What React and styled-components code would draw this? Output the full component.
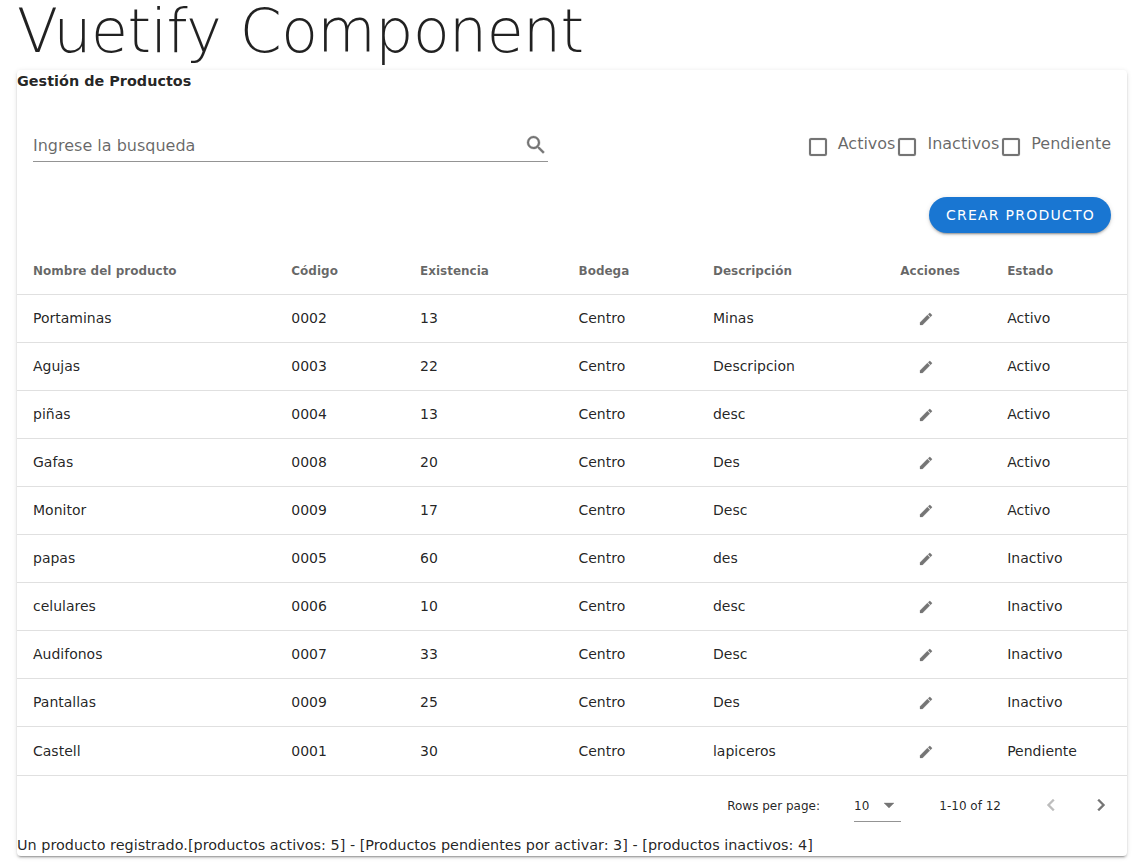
import React from "react";
import styled, { createGlobalStyle } from "styled-components";

const Global = createGlobalStyle`
  *, *::before, *::after { box-sizing: border-box; }
  body { margin: 0; background: #fff; overflow: hidden; }
`;
const Page = styled.main`
  height: 865px;
  padding: 0 18px 0 17px;
  font-family: "DejaVu Sans", sans-serif;
  color: rgba(0, 0, 0, 0.87);
`;
const Title = styled.h1`
  margin: 0;
  height: 70px;
  font-family: "DejaVu Sans Light", "DejaVu Sans", sans-serif;
  font-size: 60px;
  font-weight: 200;
  line-height: 62px;
  letter-spacing: -0.5px;
  white-space: nowrap;
`;
const Card = styled.section`
  height: 786px;
  border-radius: 4px;
  background: #fff;
  box-shadow: 0 3px 1px -2px rgba(0,0,0,.2), 0 2px 2px 0 rgba(0,0,0,.14), 0 1px 5px 0 rgba(0,0,0,.12);
`;
const Subtitle = styled.h2`
  margin: 0;
  height: 23px;
  font-size: 14.4px;
  font-weight: 700;
  line-height: 22px;
  letter-spacing: .009px;
`;
const Filters = styled.div`
  display: flex;
  justify-content: space-between;
  align-items: flex-start;
  height: 104px;
  padding: 35px 16px 0;
`;
const Search = styled.label`
  display: flex;
  justify-content: space-between;
  width: 515px;
  height: 34px;
  border-bottom: 1px solid #949494;
  font-size: 16px;
  line-height: 36px;
  color: rgba(0,0,0,.6);
  svg { margin-top: 5px; }
`;
const Icon = styled.svg`
  display: block;
  flex: none;
  width: ${p => p.$size || 24}px;
  height: ${p => p.$size || 24}px;
  fill: ${p => p.$color || "#757575"};
  stroke: ${p => p.$color || "#757575"};
  stroke-width: .35;
`;
const Checks = styled.div`
  display: flex;
  padding-top: 1px;
`;
const Check = styled.label`
  display: flex;
  font-size: 16px;
  line-height: 29px;
  color: rgba(0,0,0,.6);
  gap: 8px;
  svg { margin-top: 6px; stroke-width: .15; }
`;
const Actions = styled.div`
  display: flex;
  justify-content: flex-end;
  height: 50px;
  padding-right: 16px;
`;
const Button = styled.button`
  width: 182px;
  height: 36px;
  padding: 0 0 0 1px;
  border: 0;
  border-radius: 28px;
  background: #1976d2;
  color: #fff;
  font: 500 14px "DejaVu Sans", sans-serif;
  letter-spacing: 1.25px;
  box-shadow: 0 3px 1px -2px rgba(0,0,0,.2), 0 2px 2px 0 rgba(0,0,0,.14), 0 1px 5px 0 rgba(0,0,0,.12);
`;
const Table = styled.table`
  width: 100%;
  table-layout: fixed;
  border-collapse: separate;
  border-spacing: 0;
`;
const Head = styled.th`
  height: 48px;
  padding: 0 16px;
  border-bottom: 1px solid rgba(0,0,0,.12);
  text-align: left;
  white-space: nowrap;
  font-size: 12px;
  color: rgba(0,0,0,.6);
`;
const Cell = styled.td`
  height: ${p => p.$last ? 49 : 48}px;
  padding: 0 16px ${p => p.$last ? 0 : 2}px;
  border-bottom: 1px solid rgba(0,0,0,.12);
  font-size: 14px;
  white-space: nowrap;
`;
const EditIcon = styled(Icon)`
  margin: 2px 0 0 18px;
`;
const Pagination = styled.div`
  display: flex;
  justify-content: flex-end;
  align-items: center;
  height: 59px;
  padding-right: 14px;
  font-size: 12px;
  > svg { margin-bottom: 2px; }
`;
const Select = styled.div`
  display: flex;
  align-items: center;
  justify-content: space-between;
  width: 47px;
  height: 32px;
  margin: 0 38.3px 0 34px;
  padding-top: 2px;
  border-bottom: 1px solid #949494;
  svg { margin-bottom: 2px; }
`;
const Range = styled.span`
  margin-right: 38px;
`;
const Next = styled(Icon)`
  margin-left: 26px;
`;
const Summary = styled.footer`
  font-size: 14.4px;
  line-height: 21px;
  letter-spacing: .009px;
`;

const products = [
  ["Portaminas", "0002", "13", "Centro", "Minas", "Activo"],
  ["Agujas", "0003", "22", "Centro", "Descripcion", "Activo"],
  ["piñas", "0004", "13", "Centro", "desc", "Activo"],
  ["Gafas", "0008", "20", "Centro", "Des", "Activo"],
  ["Monitor", "0009", "17", "Centro", "Desc", "Activo"],
  ["papas", "0005", "60", "Centro", "des", "Inactivo"],
  ["celulares", "0006", "10", "Centro", "desc", "Inactivo"],
  ["Audifonos", "0007", "33", "Centro", "Desc", "Inactivo"],
  ["Pantallas", "0009", "25", "Centro", "Des", "Inactivo"],
  ["Castell", "0001", "30", "Centro", "lapiceros", "Pendiente"],
];
const columns = [
  ["Nombre del producto", 258.3], ["Código", 128.7], ["Existencia", 158.5],
  ["Bodega", 134.5], ["Descripción", 187.3], ["Acciones", 106.9], ["Estado", 135.8],
];

export default function App() {
  return <>
    <Global />
    <Page>
      <Title>Vuetify Component</Title>
      <Card>
        <Subtitle>Gestión de Productos</Subtitle>
        <Filters>
          <Search>Ingrese la busqueda
            <Icon viewBox="0 0 24 24"><path d="M9.5,3A6.5,6.5 0 0,1 16,9.5C16,11.11 15.41,12.59 14.44,13.73L14.71,14H15.5L20.5,19L19,20.5L14,15.5V14.71L13.73,14.44C12.59,15.41 11.11,16 9.5,16A6.5,6.5 0 0,1 3,9.5A6.5,6.5 0 0,1 9.5,3M9.5,5C7,5 5,7 5,9.5C5,12 7,14 9.5,14C12,14 14,12 14,9.5C14,7 12,5 9.5,5Z" /></Icon>
          </Search>
          <Checks>
            {["Activos", "Inactivos", "Pendiente"].map(label => <Check key={label}>
              <Icon viewBox="0 0 24 24"><path d="M19,3H5C3.89,3 3,3.89 3,5V19A2,2 0 0,0 5,21H19A2,2 0 0,0 21,19V5C21,3.89 20.1,3 19,3M19,5V19H5V5H19Z" /></Icon>{label}
            </Check>)}
          </Checks>
        </Filters>
        <Actions><Button>CREAR PRODUCTO</Button></Actions>
        <Table>
          <colgroup>{columns.map(([name, width]) => <col key={name} width={width} />)}</colgroup>
          <thead><tr>{columns.map(([name]) => <Head key={name}>{name}</Head>)}</tr></thead>
          <tbody>{products.map((row, i) => <tr key={i}>
            {row.slice(0, 5).map((value, j) => <Cell key={j} $last={i === 9}>{value}</Cell>)}
            <Cell $last={i === 9}><EditIcon $size={16} viewBox="0 0 24 24"><path d="M20.71,7.04C21.1,6.65 21.1,6 20.71,5.63L18.37,3.29C18,2.9 17.35,2.9 16.96,3.29L15.12,5.12L18.87,8.87M3,17.25V21H6.75L17.81,9.93L14.06,6.18L3,17.25Z" /></EditIcon></Cell>
            <Cell $last={i === 9}>{row[5]}</Cell>
          </tr>)}</tbody>
        </Table>
        <Pagination>
          <span>Rows per page:</span>
          <Select>10<Icon viewBox="0 0 24 24"><path d="M7,10L12,15L17,10H7Z" /></Icon></Select>
          <Range>1-10 of 12</Range>
          <Icon $color="#bdbdbd" viewBox="0 0 24 24"><path d="M15.41,16.58L10.83,12L15.41,7.41L14,6L8,12L14,18L15.41,16.58Z" /></Icon>
          <Next viewBox="0 0 24 24"><path d="M8.59,16.58L13.17,12L8.59,7.41L10,6L16,12L10,18L8.59,16.58Z" /></Next>
        </Pagination>
        <Summary>Un producto registrado.[productos activos: 5] - [Productos pendientes por activar: 3] - [productos inactivos: 4]</Summary>
      </Card>
    </Page>
  </>;
}
